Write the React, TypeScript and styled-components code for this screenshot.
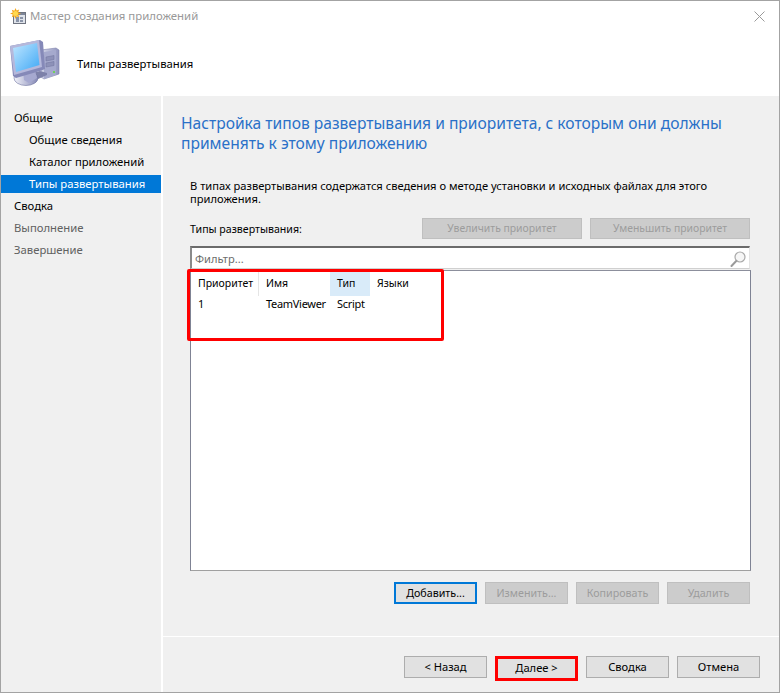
import React from "react";
import styled, { createGlobalStyle } from "styled-components";

const Global = createGlobalStyle`
  html, body { margin: 0; padding: 0; background: #fff; }
  body { font-family: "Noto Sans", "Open Sans", sans-serif; font-size: 12px; color: #000; }
  * { box-sizing: border-box; }
`;

const Win = styled.div`
  width: 780px; height: 693px; display: flex; flex-direction: column; background: #fff;
  border: 1px solid #a3a3a3;
`;
const TitleBar = styled.div`
  height: 30px; display: flex; align-items: center; padding: 0 14px 0 9px; gap: 4px; flex: none;
`;
const TitleText = styled.span`
  font-size: 11.4px; color: #999; flex: 1; margin-top: -1px;
`;
const Header = styled.div`
  height: 65px; flex: none; display: flex; align-items: center; gap: 17px; padding: 1px 0 0 9px;
`;
const HeaderLabel = styled.span` font-size: 11.3px; margin-top: -1px; `;
const Body = styled.div` flex: 1; display: flex; min-height: 0; gap: 2px; `;
const Side = styled.nav`
  width: 160px; flex: none; background: #f0f0f0; padding-top: 13px; display: flex; flex-direction: column; gap: 4px;
`;
const SideItem = styled.div<{ $sub?: boolean; $active?: boolean; $muted?: boolean }>`
  height: 18px; line-height: 18px; font-size: 11.3px; white-space: nowrap;
  padding-left: ${(p) => (p.$sub ? 28 : 13)}px;
  background: ${(p) => (p.$active ? "#0078d7" : "transparent")};
  color: ${(p) => (p.$active ? "#fff" : p.$muted ? "#616161" : "#000")};
`;
const Main = styled.main` flex: 1; background: #f0f0f0; display: flex; flex-direction: column; min-width: 0; `;
const Content = styled.div` flex: 1; padding: 17px 27px 0 18px; display: flex; flex-direction: column; `;
const Heading = styled.h1`
  margin: 0; font-weight: 400; font-size: 15.6px; line-height: 20px; color: #2a70c8; width: 570px;
`;
const Desc = styled.p`
  margin: 26px 0 0 9px; font-size: 11.15px; line-height: 13px; width: 545px;
`;
const LabelRow = styled.div`
  margin: 13px 0 0 9px; height: 21px; display: flex; align-items: center; gap: 8px; padding-right: 2px;
`;
const Label = styled.span` flex: 1; font-size: 10.6px; margin-top: 1px; `;
const Btn = styled.button<{ $w?: number; $h?: number; $off?: boolean; $focus?: boolean; $red?: boolean; $fs?: number }>`
  width: ${(p) => p.$w ?? 83}px; height: ${(p) => p.$h ?? 22}px; padding: 0 0 ${(p) => (p.$red ? 2 : 0)}px; font-family: inherit;
  font-size: ${(p) => p.$fs ?? 11.15}px; line-height: 1;
  background: ${(p) => (p.$off ? "#cccccc" : "#e1e1e1")};
  color: ${(p) => (p.$off ? "#9c9c9c" : "#000")};
  border: ${(p) => (p.$red ? "3px solid #ff0000" : p.$focus ? "2px solid #0078d7" : p.$off ? "1px solid #bfbfbf" : "1px solid #adadad")};
`;
const Filter = styled.div`
  margin: 7px 0 0 9px; height: 23px; background: #fff; display: flex; align-items: center; justify-content: space-between;
  border-top: 2px solid #6b6b6b; border-left: 2px solid #8a8a8a; border-right: 1px solid #e3e3e3; border-bottom: 1px solid #d0d0d0;
  padding: 1px 3px 0 3px; width: 560px;
`;
const FilterText = styled.span` font-size: 11.1px; color: #6d6d6d; `;
const ListWrap = styled.div`
  margin: 1px 0 0 9px; position: relative; width: 561px; height: 301px; background: #fff;
  border: 1px solid #7f8394; border-top-color: #8c8f9c; border-bottom-color: #a0a0a0;
`;
const Cols = "68px 71px 40px 1fr";
const Head = styled.div`
  display: grid; grid-template-columns: ${Cols}; height: 24px; margin-top: 1px;
`;
const HeadCell = styled.div<{ $hot?: boolean; $sep?: boolean }>`
  padding-left: 7px; line-height: 23px; font-size: 10.5px; white-space: nowrap;
  background: ${(p) => (p.$hot ? "#d9ebf9" : "transparent")};
  border-right: ${(p) => (p.$sep ? "1px solid #e5e5e5" : "none")};
`;
const Row = styled.div`
  display: grid; grid-template-columns: ${Cols}; height: 18px; margin-top: -1px;
`;
const Cell = styled.div`
  padding-left: 7px; line-height: 18px; font-size: 11px; white-space: nowrap; letter-spacing: -0.3px;
`;
const RedFrame = styled.div`
  position: absolute; left: -4px; top: -2px; width: 257px; height: 72px; border: 3px solid #ff0000; border-radius: 2px; pointer-events: none;
`;
const Actions = styled.div`
  margin-top: 11px; display: flex; justify-content: flex-end; gap: 8px; margin-right: 2px;
`;
const Footer = styled.footer`
  height: 56px; flex: none; border-top: 1px solid #fff; display: flex; justify-content: flex-end; align-items: flex-start; gap: 8px; padding: 19px 19px 0 0;
`;

const TitleIcon = () => (
  <svg width="16" height="16" viewBox="0 0 16 16" style={{ flex: "none" }}>
    <rect x="3.5" y="4.5" width="12" height="11" fill="#dfe3ea" stroke="#6f7480" />
    <rect x="4" y="5" width="11" height="2" fill="#7d8698" />
    <rect x="6" y="9" width="3" height="5" fill="#8a94a8" />
    <rect x="10" y="9" width="3" height="2" fill="#8a94a8" />
    <rect x="10" y="12" width="3" height="2" fill="#8a94a8" />
    <path d="M5.5 0l1.1 2.6 2.6-1-1 2.6L11 5.5l-2.8 1.1 1 2.6-2.6-1L5.5 11 4.4 8.2l-2.6 1 1-2.6L0 5.5l2.8-1.1-1-2.6 2.6 1z" fill="#f6a81c" />
    <circle cx="5.5" cy="5.5" r="2.5" fill="#ffd94f" />
  </svg>
);

const PcIcon = () => (
  <svg width="50" height="48" viewBox="0 0 50 48" style={{ flex: "none" }}>
    <defs>
      <linearGradient id="scr" x1="0" y1="0" x2="1" y2="1">
        <stop offset="0" stopColor="#bfe6ff" />
        <stop offset="1" stopColor="#3fa8f5" />
      </linearGradient>
      <linearGradient id="tower" x1="0" y1="0" x2="1" y2="0">
        <stop offset="0" stopColor="#d6d9ea" />
        <stop offset="1" stopColor="#8f93bd" />
      </linearGradient>
      <linearGradient id="base" x1="0" y1="0" x2="1" y2="0">
        <stop offset="0" stopColor="#f2f3fa" />
        <stop offset="1" stopColor="#8488b5" />
      </linearGradient>
    </defs>
    <path d="M31 10l15-2 3 2v24l-15 5-3-2z" fill="url(#tower)" stroke="#7f83ac" strokeWidth=".6" />
    <path d="M34 12l12-2v25l-12 4z" fill="#a5a9cd" />
    <path d="M36 17l8-1.5v4l-8 1.5zM36 23l8-1.5v4l-8 1.5z" fill="#8d91b8" stroke="#6e729c" strokeWidth=".5" />
    <rect x="43" y="31" width="2" height="2" fill="#6fd05c" />
    <path d="M18 34l12-3 7 2v2l-9 4-10-3z" fill="#7d81a9" />
    <ellipse cx="16" cy="38" rx="12" ry="7.5" fill="url(#base)" stroke="#6f739f" strokeWidth=".6" />
    <path d="M13 30l11-3 3 11-8 5-5-3z" fill="#a6a9d0" />
    <path d="M0 6L30 0l3 2 2 27-5 2-24 7-3-2z" fill="#8589b8" />
    <path d="M0 6L29 0l3 27-28 8z" fill="#b5b8db" />
    <path d="M3 8l24-5 2.5 22L6 32z" fill="url(#scr)" />
  </svg>
);

const CloseIcon = () => (
  <svg width="11" height="11" viewBox="0 0 11 11" style={{ flex: "none" }}>
    <path d="M.5.5l10 10M10.5.5l-10 10" stroke="#9a9a9a" strokeWidth="1" />
  </svg>
);

const SearchIcon = () => (
  <svg width="16" height="16" viewBox="0 0 16 16" style={{ flex: "none" }}>
    <circle cx="10" cy="6" r="5" fill="#f6f6f6" stroke="#a9a9a9" strokeWidth="1.2" />
    <path d="M6.2 10L1.5 15" stroke="#9a9a9a" strokeWidth="2" strokeLinecap="round" />
  </svg>
);

export default function App() {
  return (
    <Win>
      <Global />
      <TitleBar>
        <TitleIcon />
        <TitleText>Мастер создания приложений</TitleText>
        <CloseIcon />
      </TitleBar>
      <Header>
        <PcIcon />
        <HeaderLabel>Типы развертывания</HeaderLabel>
      </Header>
      <Body>
        <Side>
          <SideItem>Общие</SideItem>
          <SideItem $sub>Общие сведения</SideItem>
          <SideItem $sub>Каталог приложений</SideItem>
          <SideItem $sub $active>Типы развертывания</SideItem>
          <SideItem>Сводка</SideItem>
          <SideItem $muted>Выполнение</SideItem>
          <SideItem $muted>Завершение</SideItem>
        </Side>
        <Main>
          <Content>
            <Heading>Настройка типов развертывания и приоритета, с которым они должны применять к этому приложению</Heading>
            <Desc>В типах развертывания содержатся сведения о методе установки и исходных файлах для этого приложения.</Desc>
            <LabelRow>
              <Label>Типы развертывания:</Label>
              <Btn $w={160} $h={21} $off $fs={10.4}>Увеличить приоритет</Btn>
              <Btn $w={160} $h={21} $off $fs={10.4}>Уменьшить приоритет</Btn>
            </LabelRow>
            <Filter>
              <FilterText>Фильтр...</FilterText>
              <SearchIcon />
            </Filter>
            <ListWrap>
              <Head>
                <HeadCell $sep>Приоритет</HeadCell>
                <HeadCell>Имя</HeadCell>
                <HeadCell $hot>Тип</HeadCell>
                <HeadCell>Языки</HeadCell>
              </Head>
              <Row>
                <Cell>1</Cell>
                <Cell>TeamViewer</Cell>
                <Cell>Script</Cell>
                <Cell />
              </Row>
              <RedFrame />
            </ListWrap>
            <Actions>
              <Btn $focus $fs={10.7}>Добавить...</Btn>
              <Btn $off $fs={10.7}>Изменить...</Btn>
              <Btn $off $fs={10.7}>Копировать</Btn>
              <Btn $off $fs={10.7}>Удалить</Btn>
            </Actions>
          </Content>
          <Footer>
            <Btn>&lt; Назад</Btn>
            <Btn $red $h={25}>Далее &gt;</Btn>
            <Btn>Сводка</Btn>
            <Btn>Отмена</Btn>
          </Footer>
        </Main>
      </Body>
    </Win>
  );
}
